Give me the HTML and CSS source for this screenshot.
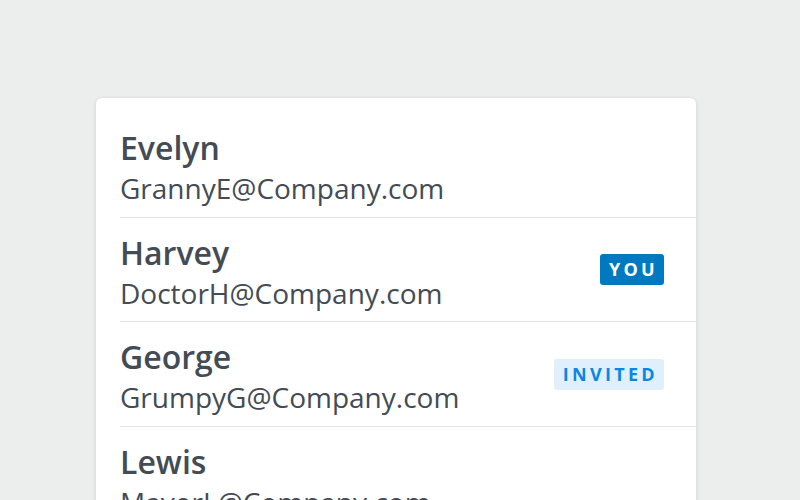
FILE: index.html
```html
<!DOCTYPE html>
<html>
<head>
<meta charset="utf-8">
<link rel="stylesheet" href="styles.css">
</head>
<body>
<div class="card">
  <div class="row">
    <div class="info">
      <div class="name">Evelyn</div>
      <div class="email">GrannyE@Company.com</div>
    </div>
  </div>
  <div class="row">
    <div class="info">
      <div class="name">Harvey</div>
      <div class="email">DoctorH@Company.com</div>
    </div>
    <span class="badge badge-you">YOU</span>
  </div>
  <div class="row">
    <div class="info">
      <div class="name">George</div>
      <div class="email">GrumpyG@Company.com</div>
    </div>
    <span class="badge badge-invited">INVITED</span>
  </div>
  <div class="row">
    <div class="info">
      <div class="name">Lewis</div>
      <div class="email">MayorL@Company.com</div>
    </div>
  </div>
</div>
</body>
</html>
```
FILE: styles.css
```css
html, body {
  margin: 0;
  padding: 0;
  height: 100%;
  overflow: hidden;
}
body {
  background: #eceeee;
  font-family: "Open Sans", "Noto Sans", sans-serif;
  color: #434c55;
  padding-top: 98px;
  box-sizing: border-box;
}
.card {
  width: 600px;
  margin-left: 96px;
  background: #ffffff;
  border-radius: 6px;
  box-shadow: 0 1px 4px rgba(0, 0, 0, 0.14);
  padding-top: 15px;
}
.row {
  display: flex;
  align-items: center;
  justify-content: space-between;
  margin-left: 24px;
  padding: 15px 32px 10.5px 0;
  border-bottom: 1px solid #e3e5e6;
}
.name {
  font-size: 32px;
  font-weight: 600;
  line-height: 40px;
}
.email {
  font-size: 28px;
  line-height: 36px;
  margin-top: 2px;
}
.badge {
  font-size: 18px;
  font-weight: 700;
  letter-spacing: 3.3px;
  line-height: 31px;
  height: 31px;
  border-radius: 3px;
  padding: 0 6px 0 9px;
  margin-top: -4px;
}
.badge-you {
  background: #0079c1;
  color: #ffffff;
}
.badge-invited {
  background: #e0effc;
  color: #0a86e6;
}
```
